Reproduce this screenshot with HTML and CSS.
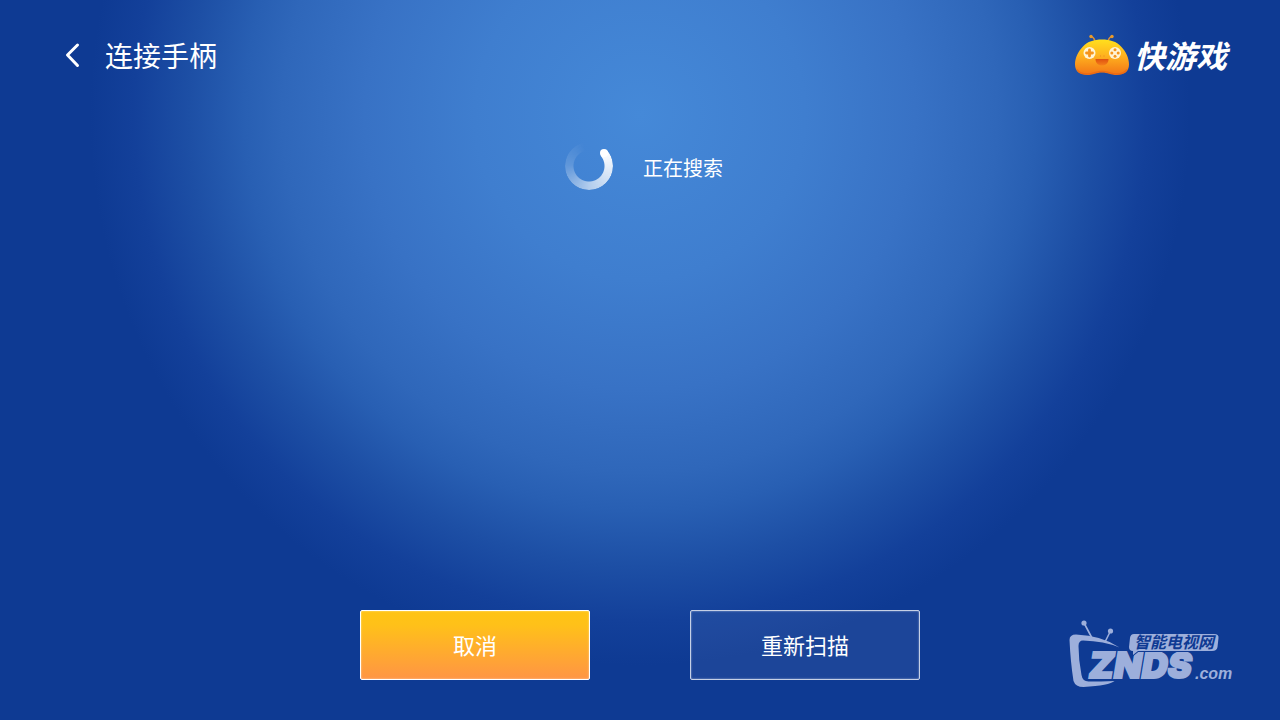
FILE: index.html
```html
<!DOCTYPE html>
<html lang="zh-CN">
<head>
<meta charset="utf-8">
<meta name="viewport" content="width=device-width, initial-scale=1">
<title>连接手柄</title>
<link rel="stylesheet" href="styles.css">
</head>
<body>
<header class="topbar">
  <div class="heading">
    <button class="back" type="button" aria-label="返回">
      <svg class="back-icon" viewBox="0 0 16 28" aria-hidden="true"><path d="M13.500 4 3.500 14l10 10.500"/></svg>
    </button>
    <h1 class="title">连接手柄</h1>
  </div>
  <div class="brand">
    <svg class="brand-icon" viewBox="0 0 56 42" aria-hidden="true">
      <defs>
        <linearGradient id="body" x1="0" y1="0" x2="0" y2="1">
          <stop offset="0" stop-color="#ffe01d"/><stop offset=".45" stop-color="#ffb31f"/><stop offset="1" stop-color="#f27416"/>
        </linearGradient>
        <linearGradient id="mouth" x1="0" y1="0" x2="0" y2="1">
          <stop offset="0" stop-color="#de5010"/><stop offset="1" stop-color="#f5801a"/>
        </linearGradient>
      </defs>
      <g fill="none" stroke="#d99035" stroke-width="1.500"><path d="M17 2.500q3 .5 4 5M38 2.500q-3 .5-4 5"/></g>
      <circle cx="17" cy="2.500" r="1.700" fill="#e89a2c"/><circle cx="38" cy="2.500" r="1.700" fill="#e89a2c"/>
      <path fill="url(#body)" d="M28 5.500c8 0 14.500 2 19 7C52 17.500 55 24 55 30.500c0 7-5 10.500-12 10.500-6.500 0-9-2.500-15-2.500S19.500 41 13 41C6 41 1 37.500 1 30.500c0-6.500 3-13 8-18C13.500 7.500 20 5.500 28 5.500Z"/>
      <path fill="none" stroke="#e85c10" stroke-opacity=".5" stroke-width="1.500" d="M3 35.500c2 3.500 6 4.500 10 4.500 6.500 0 9-2.500 15-2.500S36.500 40 43 40c5 0 8-1.500 10-4.500"/>
      <circle cx="15.500" cy="19" r="6" fill="#fff4d5"/><circle cx="41" cy="19" r="6" fill="#fff4d5"/>
      <path d="M15.500 16v6M12.500 19h6" stroke="#f5941c" stroke-width="2.800" stroke-linecap="round"/>
      <g fill="#f5941c"><circle cx="41" cy="15.800" r="1.500"/><circle cx="41" cy="22.200" r="1.500"/><circle cx="37.800" cy="19" r="1.500"/><circle cx="44.200" cy="19" r="1.500"/></g>
      <path d="M21.500 25h13c0 4-2.500 6.500-6.500 6.500S21.500 29 21.500 25Z" fill="url(#mouth)"/>
      <circle cx="26.500" cy="22" r=".7" fill="#ed9320"/><circle cx="30" cy="22" r=".7" fill="#ed9320"/>
    </svg>
    <span class="brand-name">快游戏</span>
  </div>
</header>

<main class="content">
  <div class="status" role="status">
    <div class="spinner"><div class="spinner-ring"></div><div class="spinner-cap"></div></div>
    <span class="status-text">正在搜索</span>
  </div>
</main>

<footer class="actions">
  <button class="action action-primary" type="button">取消</button>
  <button class="action" type="button">重新扫描</button>
</footer>

<svg class="watermark" viewBox="0 0 166 72" role="img" aria-label="ZNDS.com 智能电视网">
  <g fill="none" stroke="#9dafdb" stroke-width="1.600"><path d="m16 5 8 15M42.500 13 37 24"/></g>
  <circle cx="16" cy="5" r="2.600"/><circle cx="42.500" cy="13" r="2.600"/>
  <path d="M1.500 22Q1.500 16.500 8 16.500q26 1 43.500 13Q36 23 15 22.500q-4.500 0-4.500 5.500 0 14 3 29 1 6.500 7 6.500 12 0 26-.5-5 4.500-31 6-8 0-10-6Q2.500 44 1.500 22Z"/>
  <text class="mark-main" x="21" y="60">ZNDS</text>
  <text class="mark-com" x="127" y="61">.com</text>
  <path class="mark-banner" d="M66 16h80q5 0 4.500 4l-1 9q-.5 4-5.500 4H70l-5 4v-4q-4 0-4-4l1-9q.5-4 4-4Z"/>
  <text class="mark-cn" x="66" y="30">智能电视网</text>
</svg>
</body>
</html>
```
FILE: styles.css
```css
* {
  box-sizing: border-box;
}

body {
  margin: 0;
  min-height: 100vh;
  display: flex;
  flex-direction: column;
  position: relative;
  color: #fff;
  font-family: "Noto Sans CJK SC", sans-serif;
  background: radial-gradient(circle 550px at 50% 115px, #4589d8 0%, #3f7ecf 30%, #3872c5 50%, #2f67ba 65%, #285fb3 72%, #1d4fa5 82%, #13409a 92%, #0e3a93 100%);
}

button {
  font: inherit;
  color: inherit;
  cursor: pointer;
}

.topbar {
  display: flex;
  justify-content: space-between;
  align-items: center;
  height: 110px;
  padding: 0 53px 0 64px;
}

.heading {
  display: flex;
  align-items: center;
  gap: 25px;
}

.back {
  display: flex;
  padding: 0;
  border: 0;
  background: none;
}

.back-icon {
  width: 16px;
  height: 28px;
  fill: none;
  stroke: #fff;
  stroke-width: 3;
  stroke-linecap: round;
  stroke-linejoin: round;
}

.title {
  margin: 0;
  font-size: 28px;
  line-height: 40px;
  font-weight: 400;
}

.brand {
  display: flex;
  align-items: center;
  gap: 4px;
}

.brand-icon {
  width: 56px;
  height: 42px;
}

.brand-name {
  font-size: 31px;
  line-height: 40px;
  font-weight: 700;
  font-style: italic;
}

.content {
  flex: 1;
  padding-top: 32px;
}

.status {
  display: flex;
  justify-content: center;
  align-items: center;
  gap: 30px;
  padding-left: 8px;
}

.spinner {
  position: relative;
  width: 48px;
  height: 48px;
}

.spinner-ring {
  height: 100%;
  border-radius: 50%;
  background: conic-gradient(from 48deg, #fff, rgba(255, 255, 255, 0.6) 130deg, rgba(255, 255, 255, 0.16) 225deg, rgba(255, 255, 255, 0) 300deg);
  mask: radial-gradient(circle, transparent 15px, #000 16px);
}

.spinner-cap {
  position: absolute;
  top: 7px;
  right: 5px;
  width: 8px;
  height: 8px;
  border-radius: 50%;
  background: #fff;
}

.status-text {
  padding-top: 4px;
  font-size: 20px;
  line-height: 28px;
}

.actions {
  display: flex;
  justify-content: center;
  gap: 100px;
  padding-bottom: 40px;
}

.action {
  width: 230px;
  height: 70px;
  padding: 0 0 2px;
  border: 1px solid #c5d0e6;
  border-radius: 2px;
  background: rgba(255, 255, 255, 0.06);
  box-shadow: inset 0 0 2px rgba(255, 255, 255, 0.6);
  font-size: 22px;
  line-height: 32px;
}

.action-primary {
  border-color: #fff;
  background: linear-gradient(#ffc414 0%, #ffc119 20%, #ff9544 100%);
}

.watermark {
  position: absolute;
  right: 46px;
  bottom: 30px;
  width: 166px;
  height: 72px;
  fill: #9dafdb;
}

.mark-banner {
  stroke: #0e3a93;
  stroke-width: 2;
  paint-order: stroke;
}

.mark-cn {
  font-size: 16px;
  font-weight: 700;
  font-style: italic;
  fill: #0e3a93;
}

.mark-main {
  font-family: Inter, "Liberation Sans", sans-serif;
  font-size: 36px;
  font-weight: 900;
  font-style: italic;
  stroke: #9dafdb;
  stroke-width: 2;
}

.mark-com {
  font-family: "Liberation Sans", sans-serif;
  font-size: 16px;
  font-weight: 700;
  font-style: italic;
}
```
